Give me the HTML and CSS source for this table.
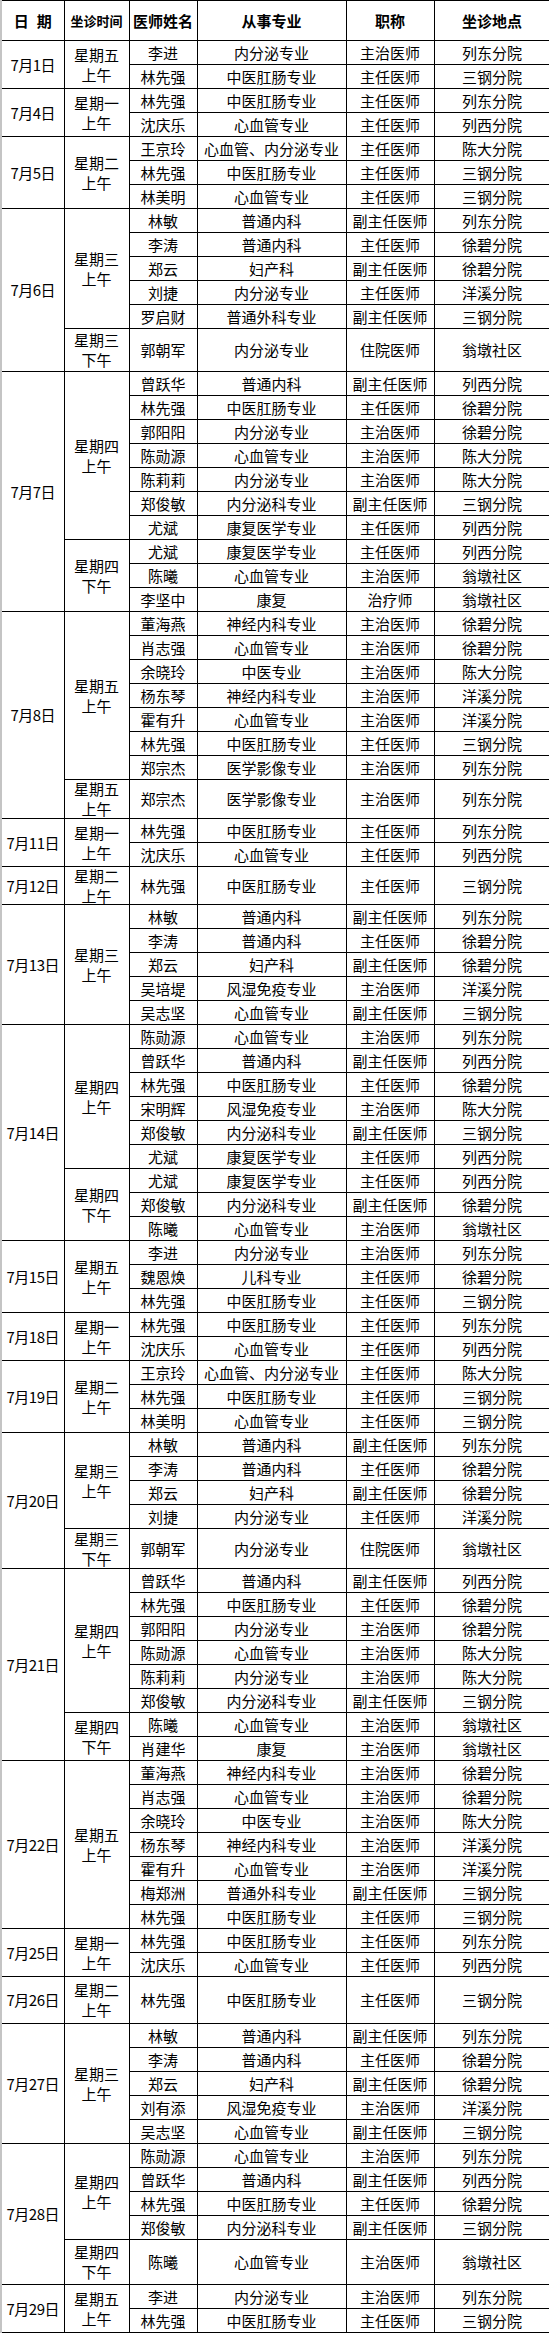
FILE: index.html
```html
<!DOCTYPE html>
<html lang="zh-CN">
<head>
<meta charset="utf-8">
<title>坐诊安排表</title>
<link rel="stylesheet" href="styles.css">
</head>
<body>
<table class="sched">
<colgroup>
<col class="c-date"><col class="c-time"><col class="c-name"><col class="c-major"><col class="c-title"><col class="c-place">
</colgroup>
<thead>
<tr class="head">
<th class="date"><span class="sp">日</span>期</th><th class="small">坐诊时间</th><th>医师姓名</th><th>从事专业</th><th>职称</th><th>坐诊地点</th>
</tr>
</thead>
<tbody>
<tr><td class="date" rowspan="2">7月1日</td><td class="time" rowspan="2"><div class="tw">星期五<br>上午</div></td><td>李进</td><td>内分泌专业</td><td>主治医师</td><td>列东分院</td></tr>
<tr><td>林先强</td><td>中医肛肠专业</td><td>主任医师</td><td>三钢分院</td></tr>

<tr><td class="date" rowspan="2">7月4日</td><td class="time" rowspan="2"><div class="tw">星期一<br>上午</div></td><td>林先强</td><td>中医肛肠专业</td><td>主任医师</td><td>列东分院</td></tr>
<tr><td>沈庆乐</td><td>心血管专业</td><td>主任医师</td><td>列西分院</td></tr>

<tr><td class="date" rowspan="3">7月5日</td><td class="time" rowspan="3"><div class="tw">星期二<br>上午</div></td><td>王京玲</td><td>心血管、内分泌专业</td><td>主任医师</td><td>陈大分院</td></tr>
<tr><td>林先强</td><td>中医肛肠专业</td><td>主任医师</td><td>三钢分院</td></tr>
<tr><td>林美明</td><td>心血管专业</td><td>主任医师</td><td>三钢分院</td></tr>

<tr><td class="date" rowspan="6">7月6日</td><td class="time" rowspan="5"><div class="tw">星期三<br>上午</div></td><td>林敏</td><td>普通内科</td><td>副主任医师</td><td>列东分院</td></tr>
<tr><td>李涛</td><td>普通内科</td><td>主任医师</td><td>徐碧分院</td></tr>
<tr><td>郑云</td><td>妇产科</td><td>副主任医师</td><td>徐碧分院</td></tr>
<tr><td>刘捷</td><td>内分泌专业</td><td>主任医师</td><td>洋溪分院</td></tr>
<tr><td>罗启财</td><td>普通外科专业</td><td>副主任医师</td><td>三钢分院</td></tr>
<tr class="h43"><td class="time"><div class="tw">星期三<br>下午</div></td><td>郭朝军</td><td>内分泌专业</td><td>住院医师</td><td>翁墩社区</td></tr>

<tr><td class="date" rowspan="10">7月7日</td><td class="time" rowspan="7"><div class="tw">星期四<br>上午</div></td><td>曾跃华</td><td>普通内科</td><td>副主任医师</td><td>列西分院</td></tr>
<tr><td>林先强</td><td>中医肛肠专业</td><td>主任医师</td><td>徐碧分院</td></tr>
<tr><td>郭阳阳</td><td>内分泌专业</td><td>主治医师</td><td>徐碧分院</td></tr>
<tr><td>陈勋源</td><td>心血管专业</td><td>主治医师</td><td>陈大分院</td></tr>
<tr><td>陈莉莉</td><td>内分泌专业</td><td>主治医师</td><td>陈大分院</td></tr>
<tr><td>郑俊敏</td><td>内分泌科专业</td><td>副主任医师</td><td>三钢分院</td></tr>
<tr><td>尤斌</td><td>康复医学专业</td><td>主任医师</td><td>列西分院</td></tr>
<tr><td class="time" rowspan="3"><div class="tw">星期四<br>下午</div></td><td>尤斌</td><td>康复医学专业</td><td>主任医师</td><td>列西分院</td></tr>
<tr><td>陈曦</td><td>心血管专业</td><td>主治医师</td><td>翁墩社区</td></tr>
<tr><td>李坚中</td><td>康复</td><td>治疗师</td><td>翁墩社区</td></tr>

<tr><td class="date" rowspan="8">7月8日</td><td class="time" rowspan="7"><div class="tw">星期五<br>上午</div></td><td>董海燕</td><td>神经内科专业</td><td>主治医师</td><td>徐碧分院</td></tr>
<tr><td>肖志强</td><td>心血管专业</td><td>主治医师</td><td>徐碧分院</td></tr>
<tr><td>余晓玲</td><td>中医专业</td><td>主治医师</td><td>陈大分院</td></tr>
<tr><td>杨东琴</td><td>神经内科专业</td><td>主治医师</td><td>洋溪分院</td></tr>
<tr><td>霍有升</td><td>心血管专业</td><td>主治医师</td><td>洋溪分院</td></tr>
<tr><td>林先强</td><td>中医肛肠专业</td><td>主任医师</td><td>三钢分院</td></tr>
<tr><td>郑宗杰</td><td>医学影像专业</td><td>主治医师</td><td>列东分院</td></tr>
<tr class="h39"><td class="time"><div class="tw">星期五<br>上午</div></td><td>郑宗杰</td><td>医学影像专业</td><td>主治医师</td><td>列东分院</td></tr>

<tr><td class="date" rowspan="2">7月11日</td><td class="time" rowspan="2"><div class="tw">星期一<br>上午</div></td><td>林先强</td><td>中医肛肠专业</td><td>主任医师</td><td>列东分院</td></tr>
<tr><td>沈庆乐</td><td>心血管专业</td><td>主任医师</td><td>列西分院</td></tr>

<tr class="h38"><td class="date">7月12日</td><td class="time"><div class="tw">星期二<br>上午</div></td><td>林先强</td><td>中医肛肠专业</td><td>主任医师</td><td>三钢分院</td></tr>

<tr><td class="date" rowspan="5">7月13日</td><td class="time" rowspan="5"><div class="tw">星期三<br>上午</div></td><td>林敏</td><td>普通内科</td><td>副主任医师</td><td>列东分院</td></tr>
<tr><td>李涛</td><td>普通内科</td><td>主任医师</td><td>徐碧分院</td></tr>
<tr><td>郑云</td><td>妇产科</td><td>副主任医师</td><td>徐碧分院</td></tr>
<tr><td>吴培堤</td><td>风湿免疫专业</td><td>主治医师</td><td>洋溪分院</td></tr>
<tr><td>吴志坚</td><td>心血管专业</td><td>副主任医师</td><td>三钢分院</td></tr>

<tr><td class="date" rowspan="9">7月14日</td><td class="time" rowspan="6"><div class="tw">星期四<br>上午</div></td><td>陈勋源</td><td>心血管专业</td><td>主治医师</td><td>列东分院</td></tr>
<tr><td>曾跃华</td><td>普通内科</td><td>副主任医师</td><td>列西分院</td></tr>
<tr><td>林先强</td><td>中医肛肠专业</td><td>主任医师</td><td>徐碧分院</td></tr>
<tr><td>宋明辉</td><td>风湿免疫专业</td><td>主治医师</td><td>陈大分院</td></tr>
<tr><td>郑俊敏</td><td>内分泌科专业</td><td>副主任医师</td><td>三钢分院</td></tr>
<tr><td>尤斌</td><td>康复医学专业</td><td>主任医师</td><td>列西分院</td></tr>
<tr><td class="time" rowspan="3"><div class="tw">星期四<br>下午</div></td><td>尤斌</td><td>康复医学专业</td><td>主任医师</td><td>列西分院</td></tr>
<tr><td>郑俊敏</td><td>内分泌科专业</td><td>副主任医师</td><td>徐碧分院</td></tr>
<tr><td>陈曦</td><td>心血管专业</td><td>主治医师</td><td>翁墩社区</td></tr>

<tr><td class="date" rowspan="3">7月15日</td><td class="time" rowspan="3"><div class="tw">星期五<br>上午</div></td><td>李进</td><td>内分泌专业</td><td>主治医师</td><td>列东分院</td></tr>
<tr><td>魏恩焕</td><td>儿科专业</td><td>主任医师</td><td>徐碧分院</td></tr>
<tr><td>林先强</td><td>中医肛肠专业</td><td>主任医师</td><td>三钢分院</td></tr>

<tr><td class="date" rowspan="2">7月18日</td><td class="time" rowspan="2"><div class="tw">星期一<br>上午</div></td><td>林先强</td><td>中医肛肠专业</td><td>主任医师</td><td>列东分院</td></tr>
<tr><td>沈庆乐</td><td>心血管专业</td><td>主任医师</td><td>列西分院</td></tr>

<tr><td class="date" rowspan="3">7月19日</td><td class="time" rowspan="3"><div class="tw">星期二<br>上午</div></td><td>王京玲</td><td>心血管、内分泌专业</td><td>主任医师</td><td>陈大分院</td></tr>
<tr><td>林先强</td><td>中医肛肠专业</td><td>主任医师</td><td>三钢分院</td></tr>
<tr><td>林美明</td><td>心血管专业</td><td>主任医师</td><td>三钢分院</td></tr>

<tr><td class="date" rowspan="5">7月20日</td><td class="time" rowspan="4"><div class="tw">星期三<br>上午</div></td><td>林敏</td><td>普通内科</td><td>副主任医师</td><td>列东分院</td></tr>
<tr><td>李涛</td><td>普通内科</td><td>主任医师</td><td>徐碧分院</td></tr>
<tr><td>郑云</td><td>妇产科</td><td>副主任医师</td><td>徐碧分院</td></tr>
<tr><td>刘捷</td><td>内分泌专业</td><td>主任医师</td><td>洋溪分院</td></tr>
<tr class="h40"><td class="time"><div class="tw">星期三<br>下午</div></td><td>郭朝军</td><td>内分泌专业</td><td>住院医师</td><td>翁墩社区</td></tr>

<tr><td class="date" rowspan="8">7月21日</td><td class="time" rowspan="6"><div class="tw">星期四<br>上午</div></td><td>曾跃华</td><td>普通内科</td><td>副主任医师</td><td>列西分院</td></tr>
<tr><td>林先强</td><td>中医肛肠专业</td><td>主任医师</td><td>徐碧分院</td></tr>
<tr><td>郭阳阳</td><td>内分泌专业</td><td>主治医师</td><td>徐碧分院</td></tr>
<tr><td>陈勋源</td><td>心血管专业</td><td>主治医师</td><td>陈大分院</td></tr>
<tr><td>陈莉莉</td><td>内分泌专业</td><td>主治医师</td><td>陈大分院</td></tr>
<tr><td>郑俊敏</td><td>内分泌科专业</td><td>副主任医师</td><td>三钢分院</td></tr>
<tr><td class="time" rowspan="2"><div class="tw">星期四<br>下午</div></td><td>陈曦</td><td>心血管专业</td><td>主治医师</td><td>翁墩社区</td></tr>
<tr><td>肖建华</td><td>康复</td><td>主治医师</td><td>翁墩社区</td></tr>

<tr><td class="date" rowspan="7">7月22日</td><td class="time" rowspan="7"><div class="tw">星期五<br>上午</div></td><td>董海燕</td><td>神经内科专业</td><td>主治医师</td><td>徐碧分院</td></tr>
<tr><td>肖志强</td><td>心血管专业</td><td>主治医师</td><td>徐碧分院</td></tr>
<tr><td>余晓玲</td><td>中医专业</td><td>主治医师</td><td>陈大分院</td></tr>
<tr><td>杨东琴</td><td>神经内科专业</td><td>主治医师</td><td>洋溪分院</td></tr>
<tr><td>霍有升</td><td>心血管专业</td><td>主治医师</td><td>洋溪分院</td></tr>
<tr><td>梅郑洲</td><td>普通外科专业</td><td>副主任医师</td><td>三钢分院</td></tr>
<tr><td>林先强</td><td>中医肛肠专业</td><td>主任医师</td><td>三钢分院</td></tr>

<tr><td class="date" rowspan="2">7月25日</td><td class="time" rowspan="2"><div class="tw">星期一<br>上午</div></td><td>林先强</td><td>中医肛肠专业</td><td>主任医师</td><td>列东分院</td></tr>
<tr><td>沈庆乐</td><td>心血管专业</td><td>主任医师</td><td>列西分院</td></tr>

<tr class="h47"><td class="date">7月26日</td><td class="time"><div class="tw">星期二<br>上午</div></td><td>林先强</td><td>中医肛肠专业</td><td>主任医师</td><td>三钢分院</td></tr>

<tr><td class="date" rowspan="5">7月27日</td><td class="time" rowspan="5"><div class="tw">星期三<br>上午</div></td><td>林敏</td><td>普通内科</td><td>副主任医师</td><td>列东分院</td></tr>
<tr><td>李涛</td><td>普通内科</td><td>主任医师</td><td>徐碧分院</td></tr>
<tr><td>郑云</td><td>妇产科</td><td>副主任医师</td><td>徐碧分院</td></tr>
<tr><td>刘有添</td><td>风湿免疫专业</td><td>主治医师</td><td>洋溪分院</td></tr>
<tr><td>吴志坚</td><td>心血管专业</td><td>副主任医师</td><td>三钢分院</td></tr>

<tr><td class="date" rowspan="5">7月28日</td><td class="time" rowspan="4"><div class="tw">星期四<br>上午</div></td><td>陈勋源</td><td>心血管专业</td><td>主治医师</td><td>列东分院</td></tr>
<tr><td>曾跃华</td><td>普通内科</td><td>副主任医师</td><td>列西分院</td></tr>
<tr><td>林先强</td><td>中医肛肠专业</td><td>主任医师</td><td>徐碧分院</td></tr>
<tr><td>郑俊敏</td><td>内分泌科专业</td><td>副主任医师</td><td>三钢分院</td></tr>
<tr class="h45"><td class="time"><div class="tw">星期四<br>下午</div></td><td>陈曦</td><td>心血管专业</td><td>主治医师</td><td>翁墩社区</td></tr>

<tr><td class="date" rowspan="2">7月29日</td><td class="time" rowspan="2"><div class="tw">星期五<br>上午</div></td><td>李进</td><td>内分泌专业</td><td>主治医师</td><td>列东分院</td></tr>
<tr><td>林先强</td><td>中医肛肠专业</td><td>主任医师</td><td>三钢分院</td></tr>
</tbody>
</table>
</body>
</html>
```
FILE: styles.css
```css
html, body {
  margin: 0;
  padding: 0;
  background: #ffffff;
}

.sched {
  border-collapse: collapse;
  table-layout: fixed;
  width: 549px;
  font-family: "Noto Sans CJK SC", "Noto Sans", sans-serif;
  font-size: 15px;
  color: #000000;
}

.c-date { width: 63px; }
.c-time { width: 65px; }
.c-name { width: 68px; }
.c-major { width: 149px; }
.c-title { width: 88px; }
.c-place { width: 116px; }

.sched th,
.sched td {
  border: 1px solid #000000;
  padding: 0;
  text-align: center;
  vertical-align: middle;
  white-space: nowrap;
  line-height: 20px;
  overflow: visible;
}

.sched th.date,
.sched td.date {
  border-left: 2px solid #c4c4c4;
}

.head {
  height: 40px;
}

.head th {
  font-weight: 700;
  font-size: 15px;
}

.head th.small {
  font-size: 13px;
}

.sp {
  margin-right: 8px;
}

.sched tbody tr {
  height: 24px;
}

.sched tbody tr.h38 { height: 38px; }
.sched tbody tr.h39 { height: 39px; }
.sched tbody tr.h40 { height: 40px; }
.sched tbody tr.h43 { height: 43px; }
.sched tbody tr.h45 { height: 45px; }
.sched tbody tr.h47 { height: 47px; }

td.date {
  letter-spacing: -0.5px;
}

.tw {
  line-height: 20px;
  margin: -4px 0;
}
```
